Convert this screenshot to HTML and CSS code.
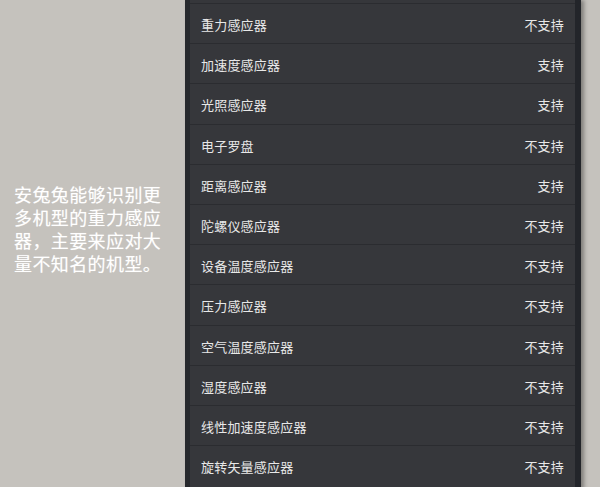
FILE: index.html
```html
<!DOCTYPE html>
<html lang="zh-CN">
<head>
    <meta charset="UTF-8">
    <meta name="viewport" content="width=device-width, initial-scale=1.0">
    <title>安兔兔 - 传感器</title>
    <link rel="stylesheet" href="styles.css">
</head>
<body>
    <div class="page">
        <aside class="intro">
            <p>安兔兔能够识别更多机型的重力感应器，主要来应对大量不知名的机型。</p>
        </aside>
        <section class="phone">
            <ul class="sensor-list">
                <li><span>重力感应器</span><span>不支持</span></li>
                <li><span>加速度感应器</span><span>支持</span></li>
                <li><span>光照感应器</span><span>支持</span></li>
                <li><span>电子罗盘</span><span>不支持</span></li>
                <li><span>距离感应器</span><span>支持</span></li>
                <li><span>陀螺仪感应器</span><span>不支持</span></li>
                <li><span>设备温度感应器</span><span>不支持</span></li>
                <li><span>压力感应器</span><span>不支持</span></li>
                <li><span>空气温度感应器</span><span>不支持</span></li>
                <li><span>湿度感应器</span><span>不支持</span></li>
                <li><span>线性加速度感应器</span><span>不支持</span></li>
                <li><span>旋转矢量感应器</span><span>不支持</span></li>
            </ul>
        </section>
    </div>
</body>
</html>
```

FILE: styles.css
```css
body {
    margin: 0;
    padding: 0;
    background-color: #c5c2bd;
    font-family: "Noto Sans CJK SC", "Liberation Sans", sans-serif;
    overflow: hidden;
}
.page {
    display: flex;
    height: 487px;
}
.intro {
    flex: 0 0 185px;
    padding-left: 14px;
    display: flex;
    align-items: center;
    padding-bottom: 30px;
    box-sizing: border-box;
}
.intro p {
    margin: 0;
    width: 152px;
    color: #fff;
    font-size: 18px;
    letter-spacing: 0.4px;
    line-height: 23px;
    text-shadow: 0 0 1px rgba(255, 255, 255, 0.4);
}
.phone {
    flex: 0 0 385px;
    height: 487px;
    background-color: #36373b;
    border-left: 5px solid #26282c;
    border-right: 6px solid #23252a;
    box-shadow: 3px 0 4px rgba(0, 0, 0, 0.35);
    padding-top: 3px;
}
.sensor-list {
    list-style: none;
    margin: 0;
    padding: 0;
}
.sensor-list li {
    display: flex;
    justify-content: space-between;
    align-items: center;
    padding: 2px 11px 0;
    box-sizing: border-box;
    height: 40.2px;
    border-top: 1px solid #2b2c30;
    color: #e8e8e8;
    font-size: 13px;
    letter-spacing: 0.2px;
}
```
